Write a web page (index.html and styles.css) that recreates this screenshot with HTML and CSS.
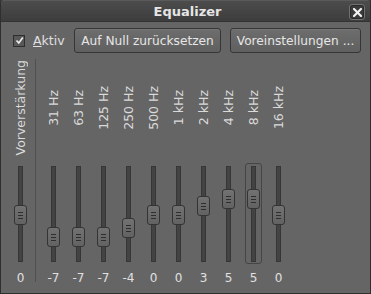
FILE: index.html
```html
<!DOCTYPE html>
<html lang="de">
<head>
    <meta charset="UTF-8">
    <title>Equalizer</title>
    <link rel="stylesheet" href="styles.css">
</head>
<body>
    <div class="window">
        <div class="titlebar">
            <span class="title">Equalizer</span>
            <span class="close">
                <svg width="9" height="9" viewBox="0 0 9 9"><path d="M1 1 L8 8 M8 1 L1 8" stroke="#f2f2f2" stroke-width="2.2" stroke-linecap="square"/></svg>
            </span>
        </div>
        <div class="content">
            <div class="toolbar">
                <label class="check">
                    <span class="box">
                        <svg width="9" height="9" viewBox="0 0 9 9"><path d="M1.5 4.5 L3.8 7 L7.8 1.5" fill="none" stroke="#eee" stroke-width="1.6"/></svg>
                    </span>
                    <span><u>A</u>ktiv</span>
                </label>
                <button class="btn btn-reset">Auf Null zurücksetzen</button>
                <button class="btn btn-presets">Voreinstellungen ...</button>
            </div>

            <div class="bands">
                <div class="band preamp">
                    <div class="label"><span>Vorverstärkung</span></div>
                    <div class="slider"><div class="track"><div class="handle" style="top: 38px"></div></div></div>
                    <div class="value">0</div>
                </div>
                <div class="sep"></div>
                <div class="band">
                    <div class="label"><span>31 Hz</span></div>
                    <div class="slider"><div class="track"><div class="handle" style="top: 60px"></div></div></div>
                    <div class="value">-7</div>
                </div>
                <div class="band">
                    <div class="label"><span>63 Hz</span></div>
                    <div class="slider"><div class="track"><div class="handle" style="top: 60px"></div></div></div>
                    <div class="value">-7</div>
                </div>
                <div class="band">
                    <div class="label"><span>125 Hz</span></div>
                    <div class="slider"><div class="track"><div class="handle" style="top: 60px"></div></div></div>
                    <div class="value">-7</div>
                </div>
                <div class="band">
                    <div class="label"><span>250 Hz</span></div>
                    <div class="slider"><div class="track"><div class="handle" style="top: 51px"></div></div></div>
                    <div class="value">-4</div>
                </div>
                <div class="band">
                    <div class="label"><span>500 Hz</span></div>
                    <div class="slider"><div class="track"><div class="handle" style="top: 38px"></div></div></div>
                    <div class="value">0</div>
                </div>
                <div class="band">
                    <div class="label"><span>1 kHz</span></div>
                    <div class="slider"><div class="track"><div class="handle" style="top: 38px"></div></div></div>
                    <div class="value">0</div>
                </div>
                <div class="band">
                    <div class="label"><span>2 kHz</span></div>
                    <div class="slider"><div class="track"><div class="handle" style="top: 29px"></div></div></div>
                    <div class="value">3</div>
                </div>
                <div class="band">
                    <div class="label"><span>4 kHz</span></div>
                    <div class="slider"><div class="track"><div class="handle" style="top: 22px"></div></div></div>
                    <div class="value">5</div>
                </div>
                <div class="band focused">
                    <div class="label"><span>8 kHz</span></div>
                    <div class="slider"><div class="track"><div class="handle" style="top: 22px"></div></div></div>
                    <div class="value">5</div>
                </div>
                <div class="band">
                    <div class="label"><span>16 kHz</span></div>
                    <div class="slider"><div class="track"><div class="handle" style="top: 38px"></div></div></div>
                    <div class="value">0</div>
                </div>
            </div>
        </div>
    </div>
</body>
</html>
```

FILE: styles.css
```css
html, body {
    margin: 0;
    padding: 0;
    background: #3a3a3a;
}
body {
    font-family: "DejaVu Sans", sans-serif;
    font-size: 12.5px;
    color: #e0e0e0;
}
.window {
    width: 371px;
    height: 294px;
    box-sizing: border-box;
    background: #656565;
    border: 1px solid #2f2f2f;
    border-top: none;
    border-radius: 4px 4px 0 0;
    overflow: hidden;
}
.titlebar {
    height: 22px;
    display: flex;
    align-items: center;
    justify-content: center;
    position: relative;
    background: linear-gradient(#4c4c4c, #3d3d3d);
    border-top: 1px solid #5a5a5a;
    border-bottom: 1px solid #333;
    box-sizing: border-box;
}
.title {
    font-weight: bold;
    font-size: 13px;
    color: #e6e6e6;
    margin-left: 4px;
}
.close {
    position: absolute;
    right: 5px;
    top: 3px;
    width: 16px;
    height: 16px;
    box-sizing: border-box;
    border: 1px solid #727272;
    border-radius: 3px;
    background: #3b3b3b;
    box-shadow: inset 0 0 0 1px #2a2a2a;
    display: flex;
    align-items: center;
    justify-content: center;
}
.content {
    padding: 6px 0 0 0;
}
.toolbar {
    display: flex;
    align-items: center;
    height: 25px;
    padding-left: 12px;
}
.check {
    display: flex;
    align-items: center;
    gap: 8px;
    width: 61px;
    flex-shrink: 0;
}
.box {
    width: 12px;
    height: 12px;
    box-sizing: border-box;
    border: 1px solid #2e2e2e;
    background: #585858;
    display: flex;
    align-items: center;
    justify-content: center;
}
.btn {
    font-family: "DejaVu Sans", sans-serif;
    font-size: 12.2px;
    color: #e6e6e6;
    height: 25px;
    padding: 0 2px;
    border: 1px solid #363636;
    border-radius: 3px;
    background: linear-gradient(#6d6d6d, #606060);
    box-shadow: inset 0 1px 0 rgba(255,255,255,0.06);
    flex-shrink: 0;
}
.btn-reset {
    width: 147px;
}
.btn-presets {
    width: 131px;
    margin-left: 9px;
}
.bands {
    display: flex;
    padding-left: 7px;
    margin-top: 6px;
}
.band {
    width: 25px;
    display: flex;
    flex-direction: column;
    align-items: center;
}
.sep {
    width: 1px;
    height: 223px;
    background: #505050;
    margin: 0 5px 0 2px;
}
.label {
    height: 98px;
    display: flex;
    align-items: center;
    justify-content: center;
}
.label span {
    writing-mode: vertical-rl;
    transform: rotate(180deg);
    white-space: nowrap;
    color: #dadada;
}
.slider {
    margin-top: 6px;
    width: 17px;
    height: 101px;
    box-sizing: border-box;
    border: 1px solid transparent;
    border-radius: 3px;
    display: flex;
    justify-content: center;
    padding-top: 2px;
}
.focused .slider {
    border-color: #454545;
}
.track {
    position: relative;
    width: 5px;
    height: 96px;
    box-sizing: border-box;
    background: #434343;
    border: 1px solid #363636;
}
.handle {
    position: absolute;
    left: -5px;
    width: 13px;
    height: 20px;
    box-sizing: border-box;
    border: 1px solid #343434;
    border-radius: 3px;
    background: linear-gradient(#727272, #626262);
}
.handle::after {
    content: "";
    position: absolute;
    left: 3px;
    top: 6px;
    width: 5px;
    height: 5px;
    border-top: 1px solid #2e2e2e;
    border-bottom: 1px solid #2e2e2e;
    background: linear-gradient(transparent 2px, #2e2e2e 2px, #2e2e2e 3px, transparent 3px);
}
.value {
    margin-top: 7px;
    font-size: 12px;
    color: #e0e0e0;
}
```
